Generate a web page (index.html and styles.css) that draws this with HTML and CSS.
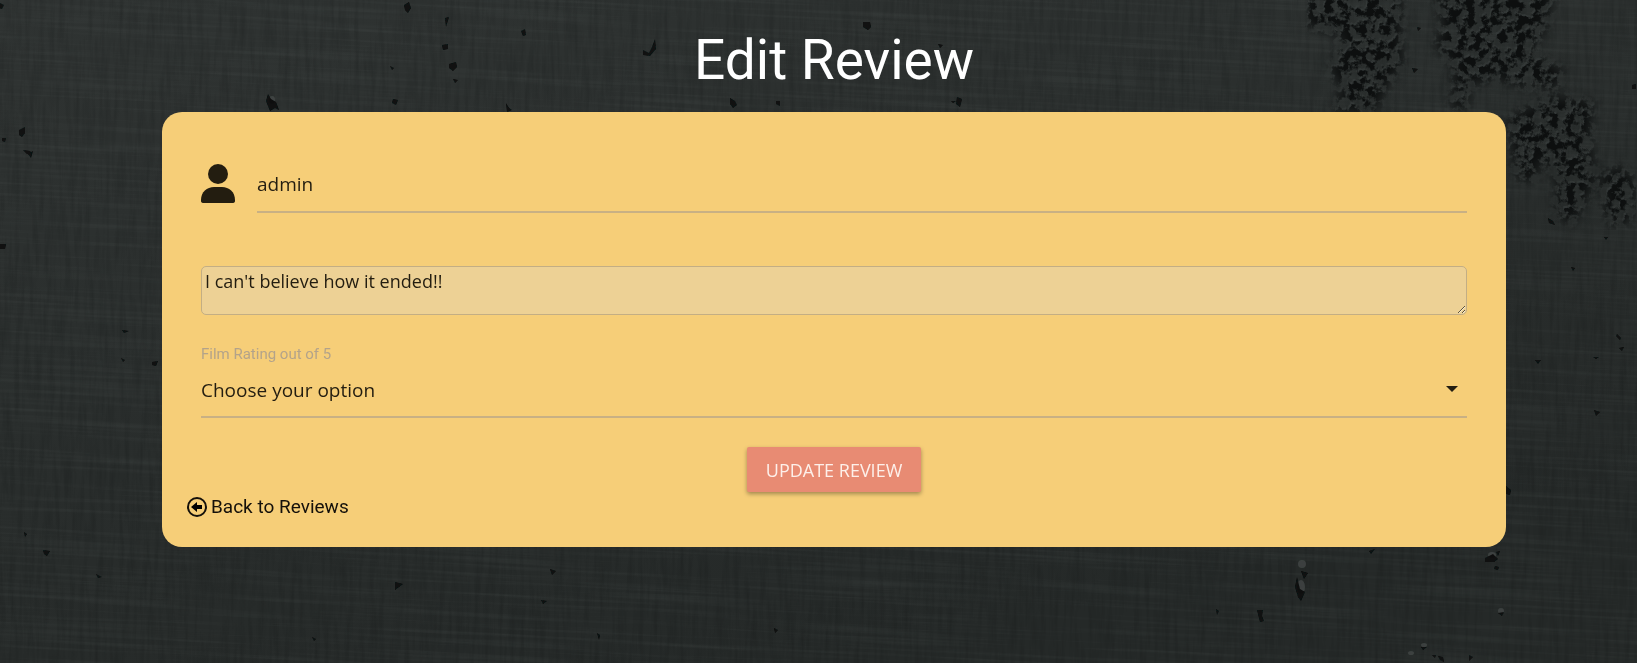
FILE: index.html
```html
<!DOCTYPE html>
<html lang="en">
<head>
<meta charset="utf-8">
<meta name="viewport" content="width=device-width, initial-scale=1">
<title>Edit Review</title>
<link rel="stylesheet" href="styles.css">
</head>
<body>
<svg class="wall" viewBox="0 0 1637 663" preserveAspectRatio="xMidYMid slice" aria-hidden="true">
  <defs>
    <linearGradient id="shade" x1="0" y1="0" x2="0.5" y2="1">
      <stop offset="0" stop-color="#2f3332"/>
      <stop offset="1" stop-color="#252928"/>
    </linearGradient>
    <filter id="brush" x="0" y="0" width="100%" height="100%" color-interpolation-filters="sRGB">
      <feTurbulence type="fractalNoise" baseFrequency="0.005 0.28" numOctaves="3" seed="4"/>
      <feColorMatrix values="0 0 0 0 0.4  0 0 0 0 0.43  0 0 0 0 0.42  1.6 0 0 0 -0.7"/>
    </filter>
    <filter id="weave" x="0" y="0" width="100%" height="100%" color-interpolation-filters="sRGB">
      <feTurbulence type="fractalNoise" baseFrequency="0.2 0.02" numOctaves="3" seed="9"/>
      <feColorMatrix values="0 0 0 0 0.04  0 0 0 0 0.05  0 0 0 0 0.05  1.2 0 0 0 -0.5"/>
    </filter>
    <filter id="flakes" x="0" y="0" width="100%" height="100%" color-interpolation-filters="sRGB">
      <feGaussianBlur in="SourceAlpha" stdDeviation="6" result="area"/>
      <feTurbulence type="fractalNoise" baseFrequency="0.12" numOctaves="4" seed="12" result="n"/>
      <feColorMatrix in="n" values="0 0 0 0 0.05  0 0 0 0 0.06  0 0 0 0 0.06  6 0 0 0 -2.6" result="dark"/>
      <feOffset in="dark" dx="-1" dy="-2" result="up"/>
      <feFlood flood-color="#3b403f" flood-opacity="0.6"/>
      <feComposite in2="up" operator="in" result="light"/>
      <feMerge result="both"><feMergeNode in="light"/><feMergeNode in="dark"/></feMerge>
      <feComposite in="both" in2="area" operator="in"/>
    </filter>
    <filter id="blur" x="0" y="0" width="100%" height="100%"><feGaussianBlur stdDeviation="0.6"/></filter>
  </defs>
  <rect width="1637" height="663" fill="url(#shade)"/>
  <rect x="-40" y="-60" width="1720" height="790" filter="url(#brush)" opacity="0.18" transform="rotate(3 818 331)"/>
  <rect width="1637" height="663" filter="url(#weave)" opacity="0.3"/>
  <g filter="url(#flakes)">
    <path d="M1305-10h95l2 75-15 20-12 27h-42l10-25-14-15 14-35-38-12z"/>
    <path d="M1435-10h120l-10 40-14 22 32 18-5 18-40-2-20-8-28 6-5 26h-14l4-42-20-22 8-20z"/>
    <path d="M1508 118l44-22 42 5-4 35 5 42-8 18-14 30-18-14 2-34-15-20-8 24-18-4z"/>
    <path d="M1600 176l20-10 16 16-4 34-14 14-12-14z"/>
  </g>
  <g filter="url(#blur)">
    <g class="light">
      <ellipse cx="1302" cy="564" rx="4" ry="4"/><ellipse cx="1411" cy="653" rx="3" ry="2"/>
      <ellipse cx="1301" cy="587" rx="4" ry="7"/><ellipse cx="1492" cy="555" rx="4" ry="3"/>
      <ellipse cx="1501" cy="611" rx="3" ry="3"/><ellipse cx="1424" cy="645" rx="3" ry="2"/>
      <ellipse cx="272" cy="100" rx="3" ry="4"/>
    </g>
    <g class="dark">
      <path d="M0 3l4 2-2 4-3-1zM19 130l6-3v6l-3 4-3-2zM28 154l5-3-2 7zM404 5l5-3 2 6-3 5-3-3zM445 18l4-1-3 10zM442 45l6-1v5l-5 1zM449 64l7-2 1 5-4 4-4-3zM453 79l5 1-3 3zM390 66l4 2-2 2zM393 99l5 1-2 5-4-2zM446 129l8 1-4 6-5-2zM506 103l3 5 3 2-5 2zM521 31l4-2 1 6-3 1zM643 50l6 3 3-6 3-8 1 10-6 7-7-1zM268 94l3 5 5 3 3 8-4-2-5 3-4-10zM580 121l4 3-2 4zM636 143l6 1-4 4zM863 22l7 0 1 5-3 3-5-3zM938 44l5 1-3 3zM730 98l5 3 2 4-4 3-3-4zM776 101l4 0 0 5-4-2zM957 97l5 2-2 8-4-3zM951 101l5 0-3 2z"/>
      <path d="M2 138l4 0-1 4-3-1zM23 150l7 1 2 3-5 0zM0 244l6 0-1 5-5 0zM122 330l7 1-5 2zM152 362l6-1-2 5-4-1zM121 358l4 2-2 2zM43 550l7 1-3 5-3-2zM24 532l3 2-2 3zM96 574l6 3-4 1zM395 582l8 2-8 6z"/>
      <path d="M550 569l6 2-4 4zM541 600l6 1-4 3zM597 633l3 2-1 5zM312 637l4 2-2 2zM774 628l4 2-3 3zM1297 577l-2 10 3 10 3 4 4-9-5-3zM1301 571l7 2-4 6zM1257 610l6 0-1 6 2 5-4 1zM1216 609l3 2-2 4zM1369 551l6-2-4 5zM1485 558l8-4 5 5-4 3-9 0zM1495 566l4 1-1 3-4-1zM1496 552l4-1-2 5zM1498 613l6-1-2 4zM1421 647l6 0-4 3zM1432 655l4 0-1 3zM1438 656l5 1 1 5-4-2zM1469 655l4 2-4 4zM1594 410l6 2-4 4zM1535 360l6 0-3 4zM1617 334l4 4-1 2-4-4zM1619 348l5-1-2 4zM1593 357l6 0-3 2zM1571 267l4 1-2 3zM1604 237l4 0-2 3zM1506 486l5 4-1 5-4-1zM1548 218l5 3 2 4-6-2zM1632 85l4-1 0 5-4 0zM1412 68l6 1-4 4zM1417 27l4 1-3 3z"/>
    </g>
  </g>
</svg>

<main class="page">
  <h1 class="title">Edit Review</h1>
  <form class="card">
    <div class="field-user">
      <label class="user-icon" for="username" aria-label="Username">
        <svg viewBox="0 0 34 40" aria-hidden="true"><circle cx="17" cy="10" r="10"/><path d="M0 36c0-8 6-13 13-13h8c7 0 13 5 13 13v1q0 2-3 2H3q-3 0-3-2z"/></svg>
      </label>
      <input class="line-input" id="username" type="text" value="admin">
    </div>
    <textarea class="review" aria-label="Review">I can't believe how it ended!!</textarea>
    <label class="rating-label" for="rating">Film Rating out of 5</label>
    <div class="select-wrap">
      <select class="line-input" id="rating">
        <option>Choose your option</option>
        <option>1</option><option>2</option><option>3</option><option>4</option><option>5</option>
      </select>
      <svg class="caret" viewBox="0 0 12 6" aria-hidden="true"><path d="M0 0h12L6 6z"/></svg>
    </div>
    <button class="submit" type="submit">UPDATE REVIEW</button>
    <a class="back" href="#">
      <svg viewBox="0 0 20 20" aria-hidden="true"><circle cx="10" cy="10" r="9"/><path d="M4 10l6-5v3h5v4h-5v3z"/></svg>
      Back to Reviews
    </a>
  </form>
</main>
</body>
</html>
```
FILE: styles.css
```css
* { box-sizing: border-box; }

body {
  margin: 0;
  min-height: 100vh;
  background: #292d2c;
  color: #231d10;
  font-family: Roboto, sans-serif;
}

.wall {
  position: fixed;
  inset: 0;
  z-index: -1;
  width: 100%;
  height: 100%;
}
.wall .dark { fill: #080b0b; opacity: 0.9; }
.wall .light { fill: #4b514f; opacity: 0.6; }

.page { padding: 28px 8% 32px 162px; }

.title {
  margin: 0 0 20px;
  color: #fff;
  font-size: 55px;
  font-weight: 400;
  line-height: 64px;
  text-align: center;
}

.card {
  display: flex;
  flex-direction: column;
  padding: 40px 39px 27px;
  border-radius: 20px;
  background: #f6ce78;
}

.field-user {
  display: flex;
  align-items: center;
  gap: 22px;
}
.user-icon { display: flex; padding-top: 2px; }
.user-icon svg { width: 34px; height: 40px; fill: #231d10; }

.line-input {
  flex: 1;
  width: 100%;
  height: 61px;
  padding: 4px 0 0;
  border: 0;
  border-bottom: 2px solid #c8b084;
  border-radius: 0;
  outline: 0;
  background: none;
  color: inherit;
  font: 19px "Open Sans", sans-serif;
  appearance: none;
}
select.line-input { height: 55px; padding: 0; }

.review {
  height: 49px;
  margin-top: 53px;
  padding: 1px 3px;
  border: 1px solid #c3ae84;
  border-radius: 5px;
  outline: 0;
  background: #edd195;
  color: inherit;
  font: 18px/26px "Open Sans", sans-serif;
  resize: vertical;
}

.rating-label {
  margin-top: 30px;
  color: #b3a38a;
  font-size: 15px;
  line-height: 18px;
}

.select-wrap { position: relative; display: flex; }
.caret {
  position: absolute;
  right: 9px;
  top: 23px;
  width: 12px;
  height: 6px;
  fill: #231d10;
  pointer-events: none;
}

.submit {
  align-self: center;
  height: 45px;
  margin-top: 29px;
  padding: 0 19px;
  border: 0;
  border-radius: 2px;
  background: #e88b73;
  box-shadow: 0 2px 4px rgba(0, 0, 0, 0.35);
  color: #fdf0ea;
  font: 18px "Open Sans", sans-serif;
}

.back {
  display: flex;
  align-items: center;
  align-self: flex-start;
  gap: 4px;
  margin: 2px 0 0 -14px;
  color: #14100a;
  font-size: 19px;
  line-height: 26px;
  text-decoration: none;
}
.back svg { width: 20px; height: 20px; }
.back circle { fill: none; stroke: currentColor; stroke-width: 2; }
```
